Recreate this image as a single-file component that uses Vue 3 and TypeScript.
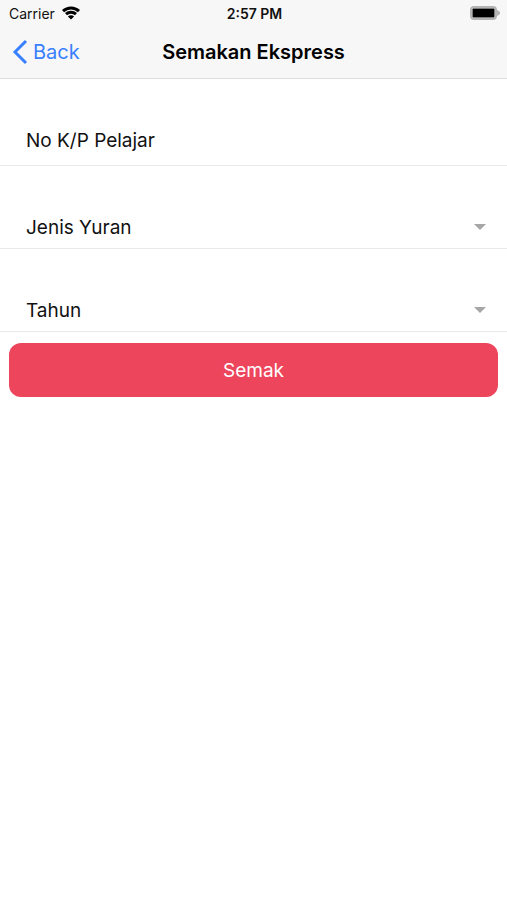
<script setup lang="ts">
import { ref } from 'vue'

const studentId = ref<string>('')
const feeType = ref<string>('')
const year = ref<string>('')
</script>

<template>
  <div class="screen">
    <header class="header">
      <div class="status">
        <div class="carrier">
          <span>Carrier</span>
          <svg class="wifi" viewBox="0 0 18 14" aria-hidden="true">
            <path d="M1 5.1a11.6 11.6 0 0 1 16 0" />
            <path d="M4 8.2a7.3 7.3 0 0 1 10 0" />
            <path class="dot" d="M9 13.6 5.9 10.5a4.4 4.4 0 0 1 6.2 0Z" />
          </svg>
        </div>
        <span class="time">2:57 PM</span>
        <svg class="battery" viewBox="0 0 30 14" aria-hidden="true">
          <rect class="shell" x="1" y="1" width="25" height="12" rx="3" />
          <rect class="charge" x="2.500" y="2.500" width="22" height="9" rx="1" />
          <path class="cap" d="M26 3 30 6v2l-4 3Z" />
        </svg>
      </div>
      <div class="toolbar">
        <a class="back" href="#">
          <svg class="chevron" viewBox="0 0 16 26" aria-hidden="true">
            <path d="M14 2 3 13l11 11" />
          </svg>
          <span>Back</span>
        </a>
        <h1 class="title">Semakan Ekspress</h1>
      </div>
    </header>

    <form class="form" @submit.prevent>
      <div class="item item-text">
        <label class="label" for="student-id">No K/P Pelajar</label>
        <input id="student-id" v-model="studentId" class="control" type="text" />
      </div>
      <div class="item">
        <label class="label" for="fee-type">Jenis Yuran</label>
        <select id="fee-type" v-model="feeType" class="control">
          <option value=""></option>
        </select>
        <svg class="caret" viewBox="0 0 12 6" aria-hidden="true"><path d="M0 0h12L6 6Z" /></svg>
      </div>
      <div class="item">
        <label class="label" for="year">Tahun</label>
        <select id="year" v-model="year" class="control">
          <option value=""></option>
        </select>
        <svg class="caret" viewBox="0 0 12 6" aria-hidden="true"><path d="M0 0h12L6 6Z" /></svg>
      </div>
      <button class="submit" type="submit">Semak</button>
    </form>
  </div>
</template>

<style>
body {
  margin: 0;
  background: #fff;
}
</style>

<style scoped>
.screen {
  font-family: Inter, "Liberation Sans", sans-serif;
  color: #111;
}

.header {
  background: #f7f7f7;
  border-bottom: 1px solid #dedede;
}

.status {
  display: grid;
  grid-template-columns: 1fr auto 1fr;
  align-items: center;
  height: 26px;
  padding: 0 7px 0 9px;
  font-size: 14px;
}

.carrier {
  display: flex;
  align-items: center;
  gap: 7px;
}

.wifi {
  width: 18px;
  height: 14px;
  fill: none;
  stroke: #000;
  stroke-width: 3;
}

.wifi .dot {
  fill: #000;
  stroke: none;
}

.time {
  font-weight: 600;
}

.battery {
  justify-self: end;
  width: 30px;
  height: 14px;
}

.shell {
  fill: #f7f7f7;
  stroke: #b4b4b4;
  stroke-width: 2;
}

.charge {
  fill: #000;
}

.cap {
  fill: #b4b4b4;
}

.toolbar {
  display: grid;
  grid-template-columns: 1fr auto 1fr;
  align-items: center;
  height: 52px;
  padding: 0 12px;
}

.back {
  display: flex;
  align-items: center;
  gap: 5px;
  color: #3880ff;
  font-size: 20px;
  text-decoration: none;
}

.chevron {
  width: 16px;
  height: 26px;
  fill: none;
  stroke: #3880ff;
  stroke-width: 3;
}

.title {
  margin: 0;
  color: #000;
  font-size: 20px;
  font-weight: 600;
}

.form {
  display: flex;
  flex-direction: column;
}

.item {
  display: grid;
  grid-template-columns: 1fr auto;
  align-items: center;
  padding: 40px 21px 0 26px;
  border-bottom: 1px solid #e9e9e9;
}

.item-text {
  padding-bottom: 4px;
}

.label,
.control {
  grid-area: 1 / 1;
}

.label {
  font-size: 19px;
  pointer-events: none;
}

.control {
  width: 100%;
  height: 42px;
  padding: 0;
  border: 0;
  outline: 0;
  background: transparent;
  color: inherit;
  font: inherit;
  font-size: 19px;
  appearance: none;
}

.caret {
  grid-area: 1 / 2;
  width: 12px;
  height: 6px;
  fill: #a6a6a6;
}

.submit {
  height: 54px;
  margin: 11px 9px;
  padding: 0;
  border: 0;
  border-radius: 12px;
  background: #ed455c;
  color: #fff;
  font-family: inherit;
  font-size: 19px;
}
</style>
